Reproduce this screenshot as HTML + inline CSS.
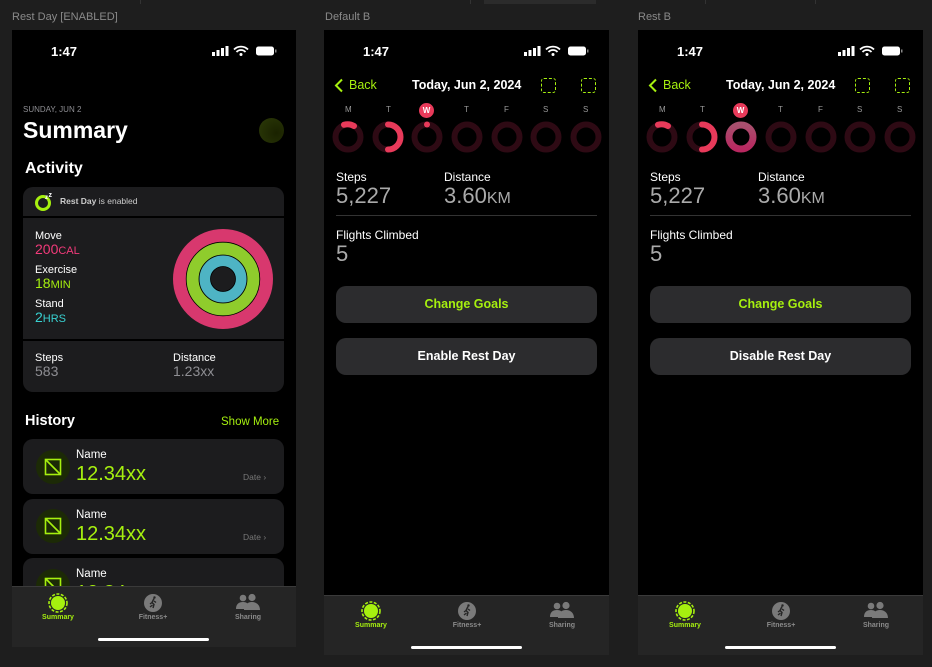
<!DOCTYPE html>
<html><head><meta charset="utf-8"><style>
*{margin:0;padding:0;box-sizing:border-box}
body{width:932px;height:667px;background:#1e1e1e;font-family:"Liberation Sans",sans-serif;position:relative;overflow:hidden;color:#fff}
.a{position:absolute}
.lbl{color:#8a8a8a;font-size:11px}
.fr{position:absolute;background:#000;overflow:hidden}
.sb{font-weight:bold;font-size:13px}
.tab{position:absolute;left:0;right:0;background:#252525;border-top:1px solid #3a3a3a}
.ti{position:absolute;font-size:7px;font-weight:bold;color:#8a8a8a;text-align:center;width:60px}
.card{position:absolute;background:#1c1c1e;border-radius:10px}
.btn{position:absolute;left:12px;width:261px;height:37px;background:#2c2c2e;border-radius:10px;text-align:center;line-height:37px;font-size:12.5px;font-weight:bold}
.g{color:#a6f00f}
</style></head><body>
<div class="a" style="left:140px;top:0;width:1px;height:4px;background:#333"></div>
<div class="a" style="left:470px;top:0;width:1px;height:4px;background:#333"></div>
<div class="a" style="left:484px;top:0;width:112px;height:4px;background:#2b2b2b"></div>
<div class="a" style="left:705px;top:0;width:1px;height:4px;background:#333"></div>
<div class="a" style="left:815px;top:0;width:1px;height:4px;background:#333"></div>
<div class="a lbl" style="left:12px;top:11px">Rest Day [ENABLED]</div>
<div class="a lbl" style="left:325px;top:11px">Default B</div>
<div class="a lbl" style="left:638px;top:11px">Rest B</div>

<!-- Frame 1 -->
<div class="fr" style="left:12px;top:30px;width:284px;height:617px">
 <div class="a sb" style="left:39px;top:14px">1:47</div>
 <svg class="a" style="left:200px;top:15px" width="76" height="12"><rect x="0" y="7" width="3" height="4" fill="#fff"/><rect x="4.5" y="5" width="3" height="6" fill="#fff"/><rect x="9" y="3" width="3" height="8" fill="#fff"/><rect x="13.5" y="1" width="3" height="10" fill="#fff"/><path d="M22 4.5a10 10 0 0 1 14 0M24.5 7a6 6 0 0 1 9 0" stroke="#fff" stroke-width="1.8" fill="none"/><circle cx="29" cy="9.5" r="1.5" fill="#fff"/><rect x="44" y="1.5" width="18" height="9" rx="2.5" fill="#fff"/><rect x="63" y="4.5" width="1.5" height="3" fill="#888"/></svg>
 <div class="a" style="left:11px;top:75px;font-size:8px;color:#8e8e93">SUNDAY, JUN 2</div>
 <div class="a" style="left:11px;top:87px;font-size:23px;font-weight:bold">Summary</div>
 <div class="a" style="left:247px;top:88px;width:25px;height:25px;border-radius:50%;background:radial-gradient(circle at 70% 60%,#1a2200,#2c3a08)"></div>
 <div class="a" style="left:13px;top:130px;font-size:16px;font-weight:bold">Activity</div>
 <div class="card" style="left:11px;top:157px;width:261px;height:205px"></div>
 <div class="a" style="left:11px;top:186px;width:261px;height:2px;background:#000"></div>
 <div class="a" style="left:11px;top:309px;width:261px;height:2px;background:#000"></div>
 <svg class="a" style="left:22px;top:162px" width="20" height="20"><circle cx="9" cy="11" r="6.5" stroke="#a6f00f" stroke-width="3" fill="none"/><text x="11" y="7" font-size="6" font-weight="bold" fill="#fff" font-family="Liberation Sans">z</text><text x="14.5" y="5" font-size="7" font-weight="bold" fill="#fff" font-family="Liberation Sans">z</text></svg>
 <div class="a" style="left:48px;top:166px;font-size:8.5px;color:#ccc"><b>Rest Day</b> is enabled</div>
 <div class="a" style="left:23px;top:200px;font-size:11px;line-height:13px">Move<br><span style="color:#f23a7a;font-size:14px">200<span style="font-size:11px">CAL</span></span></div>
 <div class="a" style="left:23px;top:234px;font-size:11px;line-height:13px">Exercise<br><span class="g" style="font-size:14px">18<span style="font-size:11px">MIN</span></span></div>
 <div class="a" style="left:23px;top:268px;font-size:11px;line-height:13px">Stand<br><span style="color:#38d1d1;font-size:14px">2<span style="font-size:11px">HRS</span></span></div>
 <svg class="a" style="left:160px;top:198px" width="102" height="102"><circle cx="51" cy="51" r="43.5" stroke="#d8386e" stroke-width="13" fill="none"/><circle cx="51" cy="51" r="30.5" stroke="#8fcc2c" stroke-width="13" fill="none"/><circle cx="51" cy="51" r="36.8" stroke="#000" stroke-width=".8" fill="none"/><circle cx="51" cy="51" r="24" stroke="#000" stroke-width=".8" fill="none"/><circle cx="51" cy="51" r="18" stroke="#4eb4c4" stroke-width="11" fill="none"/><circle cx="51" cy="51" r="12.5" fill="#1c1c1e" stroke="#000" stroke-width=".8"/></svg>
 <div class="a" style="left:23px;top:322px;font-size:11px;line-height:13px">Steps<br><span style="color:#8e8e93;font-size:14px">583</span></div>
 <div class="a" style="left:161px;top:322px;font-size:11px;line-height:13px">Distance<br><span style="color:#8e8e93;font-size:14px">1.23xx</span></div>
 <div class="a" style="left:13px;top:383px;font-size:14.5px;font-weight:bold">History</div>
 <div class="a g" style="left:209px;top:386px;font-size:11.5px">Show More</div>
 <div class="card" style="left:11px;top:409px;width:261px;height:55px"></div>
 <div class="card" style="left:11px;top:469px;width:261px;height:55px"></div>
 <div class="card" style="left:11px;top:528px;width:261px;height:55px"></div>
 <div class="a" style="left:24px;top:420px;line-height:0">
  <svg width="34" height="34"><circle cx="17" cy="17" r="17" fill="#1c2a06"/><rect x="9.5" y="9.5" width="15" height="15" stroke="#a6f00f" stroke-width="1.6" fill="none"/><path d="M9.5 9.5L24.5 24.5" stroke="#a6f00f" stroke-width="1.6"/></svg></div>
 <div class="a" style="left:24px;top:479px;line-height:0">
  <svg width="34" height="34"><circle cx="17" cy="17" r="17" fill="#1c2a06"/><rect x="9.5" y="9.5" width="15" height="15" stroke="#a6f00f" stroke-width="1.6" fill="none"/><path d="M9.5 9.5L24.5 24.5" stroke="#a6f00f" stroke-width="1.6"/></svg></div>
 <div class="a" style="left:24px;top:539px;line-height:0">
  <svg width="34" height="34"><circle cx="17" cy="17" r="17" fill="#1c2a06"/><rect x="9.5" y="9.5" width="15" height="15" stroke="#a6f00f" stroke-width="1.6" fill="none"/><path d="M9.5 9.5L24.5 24.5" stroke="#a6f00f" stroke-width="1.6"/></svg></div>
 <div class="a" style="left:64px;top:419px;font-size:11.5px;line-height:13px">Name<br><span class="g" style="font-size:20px;line-height:24px">12.34xx</span></div>
 <div class="a" style="left:64px;top:479px;font-size:11.5px;line-height:13px">Name<br><span class="g" style="font-size:20px;line-height:24px">12.34xx</span></div>
 <div class="a" style="left:64px;top:538px;font-size:11.5px;line-height:13px">Name<br><span class="g" style="font-size:20px;line-height:24px">12.34xx</span></div>
 <div class="a" style="left:231px;top:442px;font-size:8.5px;color:#777">Date ›</div>
 <div class="a" style="left:231px;top:502px;font-size:8.5px;color:#777">Date ›</div>
 <div class="tab" style="top:556px;height:61px">
  <svg class="a" style="left:36px;top:6px" width="20" height="20"><circle cx="10" cy="10" r="7" fill="#a6f00f"/><circle cx="10" cy="10" r="9" stroke="#a6f00f" stroke-width="1.6" stroke-dasharray="3 1.5" fill="none"/></svg>
  <div class="ti" style="left:16px;top:27px;color:#a6f00f">Summary</div>
  <svg class="a" style="left:131px;top:6px" width="20" height="20"><circle cx="10" cy="10" r="9" fill="#7a7a7a"/><path d="M11 5.5l-2 4 2 2-1 3.5M9 9.5l-2 1.5M11 8l2 1.5M9.5 12l-2.5 2" stroke="#252525" stroke-width="1.4" fill="none"/><circle cx="11.5" cy="4.5" r="1.2" fill="#252525"/></svg>
  <div class="ti" style="left:111px;top:27px">Fitness+</div>
  <svg class="a" style="left:224px;top:6px" width="24" height="18"><circle cx="7" cy="5" r="3.3" fill="#7a7a7a"/><circle cx="16" cy="4.5" r="3.6" fill="#7a7a7a"/><path d="M0 16c0-5 3-7 7-7s6 2 6 7zM8 17c0-5 3.5-8 8-8s8 3 8 8z" fill="#7a7a7a"/></svg>
  <div class="ti" style="left:206px;top:27px">Sharing</div>
  <div class="a" style="left:86px;top:51px;width:111px;height:3px;border-radius:2px;background:#fff"></div>
 </div>
</div>

<!-- Frame 2 -->
<div class="fr" style="left:324px;top:30px;width:285px;height:625px">
 <div class="a sb" style="left:39px;top:14px">1:47</div>
 <svg class="a" style="left:200px;top:15px" width="76" height="12"><rect x="0" y="7" width="3" height="4" fill="#fff"/><rect x="4.5" y="5" width="3" height="6" fill="#fff"/><rect x="9" y="3" width="3" height="8" fill="#fff"/><rect x="13.5" y="1" width="3" height="10" fill="#fff"/><path d="M22 4.5a10 10 0 0 1 14 0M24.5 7a6 6 0 0 1 9 0" stroke="#fff" stroke-width="1.8" fill="none"/><circle cx="29" cy="9.5" r="1.5" fill="#fff"/><rect x="44" y="1.5" width="18" height="9" rx="2.5" fill="#fff"/><rect x="63" y="4.5" width="1.5" height="3" fill="#888"/></svg>
 <svg class="a" style="left:10px;top:48px" width="10" height="15"><path d="M8 1.5L2 7.5l6 6" stroke="#a6f00f" stroke-width="2" fill="none"/></svg>
 <div class="a g" style="left:25px;top:48px;font-size:12.5px">Back</div>
 <div class="a" style="left:88px;top:48px;font-size:12.5px;font-weight:bold">Today, Jun 2, 2024</div>
 <div class="a" style="left:217px;top:48px;width:15px;height:15px;border:1.5px dashed #a6f00f;border-radius:3px"></div>
 <div class="a" style="left:257px;top:48px;width:15px;height:15px;border:1.5px dashed #a6f00f;border-radius:3px"></div>
 <div class="a" style="top:75px;left:0;width:285px;height:12px;font-size:8px;color:#999">
  <span class="a" style="left:21px">M</span><span class="a" style="left:62px">T</span><span class="a" style="left:140px">T</span><span class="a" style="left:180px">F</span><span class="a" style="left:219px">S</span><span class="a" style="left:259px">S</span>
 </div>
 <div class="a" style="left:95px;top:73px;width:15px;height:15px;border-radius:50%;background:#e83a5a;color:#fff;font-size:8px;font-weight:bold;text-align:center;line-height:15px">W</div>
 <svg class="a" style="left:0;top:90px" width="285" height="34">
  <g fill="none" stroke="#2e0a14" stroke-width="6">
   <circle cx="24" cy="17" r="12.5"/><circle cx="64" cy="17" r="12.5"/><circle cx="103" cy="17" r="12.5"/><circle cx="143" cy="17" r="12.5"/><circle cx="183" cy="17" r="12.5"/><circle cx="222" cy="17" r="12.5"/><circle cx="262" cy="17" r="12.5"/>
  </g>
  <path d="M20 4.8A12.5 12.5 0 0 1 30 6" stroke="#e83a5a" stroke-width="6" stroke-linecap="round" fill="none"/>
  <path d="M64 4.5A12.5 12.5 0 0 1 64 29.5" stroke="#e83a5a" stroke-width="6" stroke-linecap="round" fill="none"/>
  <circle cx="103" cy="4.5" r="3" fill="#e83a5a"/>
 </svg>
 <div class="a" style="left:12px;top:140px;font-size:12px;line-height:14px">Steps<br><span style="color:#aaa;font-size:22px;line-height:24px">5,227</span></div>
 <div class="a" style="left:120px;top:140px;font-size:12px;line-height:14px">Distance<br><span style="color:#aaa;font-size:22px;line-height:24px">3.60<span style="font-size:16px">KM</span></span></div>
 <div class="a" style="left:12px;top:185px;width:261px;height:1px;background:#333"></div>
 <div class="a" style="left:12px;top:198px;font-size:12px;line-height:14px">Flights Climbed<br><span style="color:#aaa;font-size:22px;line-height:24px">5</span></div>
 <div class="btn g" style="top:256px">Change Goals</div>
 <div class="btn" style="top:308px">Enable Rest Day</div>
 <div class="tab" style="top:565px;height:60px">
  <svg class="a" style="left:37px;top:5px" width="20" height="20"><circle cx="10" cy="10" r="7" fill="#a6f00f"/><circle cx="10" cy="10" r="9" stroke="#a6f00f" stroke-width="1.6" stroke-dasharray="3 1.5" fill="none"/></svg>
  <div class="ti" style="left:17px;top:26px;color:#a6f00f">Summary</div>
  <svg class="a" style="left:133px;top:5px" width="20" height="20"><circle cx="10" cy="10" r="9" fill="#7a7a7a"/><path d="M11 5.5l-2 4 2 2-1 3.5M9 9.5l-2 1.5M11 8l2 1.5M9.5 12l-2.5 2" stroke="#252525" stroke-width="1.4" fill="none"/><circle cx="11.5" cy="4.5" r="1.2" fill="#252525"/></svg>
  <div class="ti" style="left:113px;top:26px">Fitness+</div>
  <svg class="a" style="left:226px;top:5px" width="24" height="18"><circle cx="7" cy="5" r="3.3" fill="#7a7a7a"/><circle cx="16" cy="4.5" r="3.6" fill="#7a7a7a"/><path d="M0 16c0-5 3-7 7-7s6 2 6 7zM8 17c0-5 3.5-8 8-8s8 3 8 8z" fill="#7a7a7a"/></svg>
  <div class="ti" style="left:208px;top:26px">Sharing</div>
  <div class="a" style="left:87px;top:50px;width:111px;height:3px;border-radius:2px;background:#fff"></div>
 </div>
</div>

<!-- Frame 3 -->
<div class="fr" style="left:638px;top:30px;width:285px;height:625px">
 <div class="a sb" style="left:39px;top:14px">1:47</div>
 <svg class="a" style="left:200px;top:15px" width="76" height="12"><rect x="0" y="7" width="3" height="4" fill="#fff"/><rect x="4.5" y="5" width="3" height="6" fill="#fff"/><rect x="9" y="3" width="3" height="8" fill="#fff"/><rect x="13.5" y="1" width="3" height="10" fill="#fff"/><path d="M22 4.5a10 10 0 0 1 14 0M24.5 7a6 6 0 0 1 9 0" stroke="#fff" stroke-width="1.8" fill="none"/><circle cx="29" cy="9.5" r="1.5" fill="#fff"/><rect x="44" y="1.5" width="18" height="9" rx="2.5" fill="#fff"/><rect x="63" y="4.5" width="1.5" height="3" fill="#888"/></svg>
 <svg class="a" style="left:10px;top:48px" width="10" height="15"><path d="M8 1.5L2 7.5l6 6" stroke="#a6f00f" stroke-width="2" fill="none"/></svg>
 <div class="a g" style="left:25px;top:48px;font-size:12.5px">Back</div>
 <div class="a" style="left:88px;top:48px;font-size:12.5px;font-weight:bold">Today, Jun 2, 2024</div>
 <div class="a" style="left:217px;top:48px;width:15px;height:15px;border:1.5px dashed #a6f00f;border-radius:3px"></div>
 <div class="a" style="left:257px;top:48px;width:15px;height:15px;border:1.5px dashed #a6f00f;border-radius:3px"></div>
 <div class="a" style="top:75px;left:0;width:285px;height:12px;font-size:8px;color:#999">
  <span class="a" style="left:21px">M</span><span class="a" style="left:62px">T</span><span class="a" style="left:140px">T</span><span class="a" style="left:180px">F</span><span class="a" style="left:219px">S</span><span class="a" style="left:259px">S</span>
 </div>
 <div class="a" style="left:95px;top:73px;width:15px;height:15px;border-radius:50%;background:#e83a5a;color:#fff;font-size:8px;font-weight:bold;text-align:center;line-height:15px">W</div>
 <svg class="a" style="left:0;top:90px" width="285" height="34">
  <defs><linearGradient id="wg" x1="0" y1="0" x2="0" y2="1"><stop offset="0" stop-color="#a8506e"/><stop offset="1" stop-color="#b82860"/></linearGradient></defs>
  <g fill="none" stroke="#2e0a14" stroke-width="6">
   <circle cx="24" cy="17" r="12.5"/><circle cx="64" cy="17" r="12.5"/><circle cx="143" cy="17" r="12.5"/><circle cx="183" cy="17" r="12.5"/><circle cx="222" cy="17" r="12.5"/><circle cx="262" cy="17" r="12.5"/>
  </g>
  <circle cx="103" cy="17" r="12" stroke="url(#wg)" stroke-width="7" fill="none"/>
  <path d="M20 4.8A12.5 12.5 0 0 1 30 6" stroke="#e83a5a" stroke-width="6" stroke-linecap="round" fill="none"/>
  <path d="M64 4.5A12.5 12.5 0 0 1 64 29.5" stroke="#e83a5a" stroke-width="6" stroke-linecap="round" fill="none"/>
 </svg>
 <div class="a" style="left:12px;top:140px;font-size:12px;line-height:14px">Steps<br><span style="color:#aaa;font-size:22px;line-height:24px">5,227</span></div>
 <div class="a" style="left:120px;top:140px;font-size:12px;line-height:14px">Distance<br><span style="color:#aaa;font-size:22px;line-height:24px">3.60<span style="font-size:16px">KM</span></span></div>
 <div class="a" style="left:12px;top:185px;width:261px;height:1px;background:#333"></div>
 <div class="a" style="left:12px;top:198px;font-size:12px;line-height:14px">Flights Climbed<br><span style="color:#aaa;font-size:22px;line-height:24px">5</span></div>
 <div class="btn g" style="top:256px">Change Goals</div>
 <div class="btn" style="top:308px">Disable Rest Day</div>
 <div class="tab" style="top:565px;height:60px">
  <svg class="a" style="left:37px;top:5px" width="20" height="20"><circle cx="10" cy="10" r="7" fill="#a6f00f"/><circle cx="10" cy="10" r="9" stroke="#a6f00f" stroke-width="1.6" stroke-dasharray="3 1.5" fill="none"/></svg>
  <div class="ti" style="left:17px;top:26px;color:#a6f00f">Summary</div>
  <svg class="a" style="left:133px;top:5px" width="20" height="20"><circle cx="10" cy="10" r="9" fill="#7a7a7a"/><path d="M11 5.5l-2 4 2 2-1 3.5M9 9.5l-2 1.5M11 8l2 1.5M9.5 12l-2.5 2" stroke="#252525" stroke-width="1.4" fill="none"/><circle cx="11.5" cy="4.5" r="1.2" fill="#252525"/></svg>
  <div class="ti" style="left:113px;top:26px">Fitness+</div>
  <svg class="a" style="left:226px;top:5px" width="24" height="18"><circle cx="7" cy="5" r="3.3" fill="#7a7a7a"/><circle cx="16" cy="4.5" r="3.6" fill="#7a7a7a"/><path d="M0 16c0-5 3-7 7-7s6 2 6 7zM8 17c0-5 3.5-8 8-8s8 3 8 8z" fill="#7a7a7a"/></svg>
  <div class="ti" style="left:208px;top:26px">Sharing</div>
  <div class="a" style="left:87px;top:50px;width:111px;height:3px;border-radius:2px;background:#fff"></div>
 </div>
</div>
</body></html>
